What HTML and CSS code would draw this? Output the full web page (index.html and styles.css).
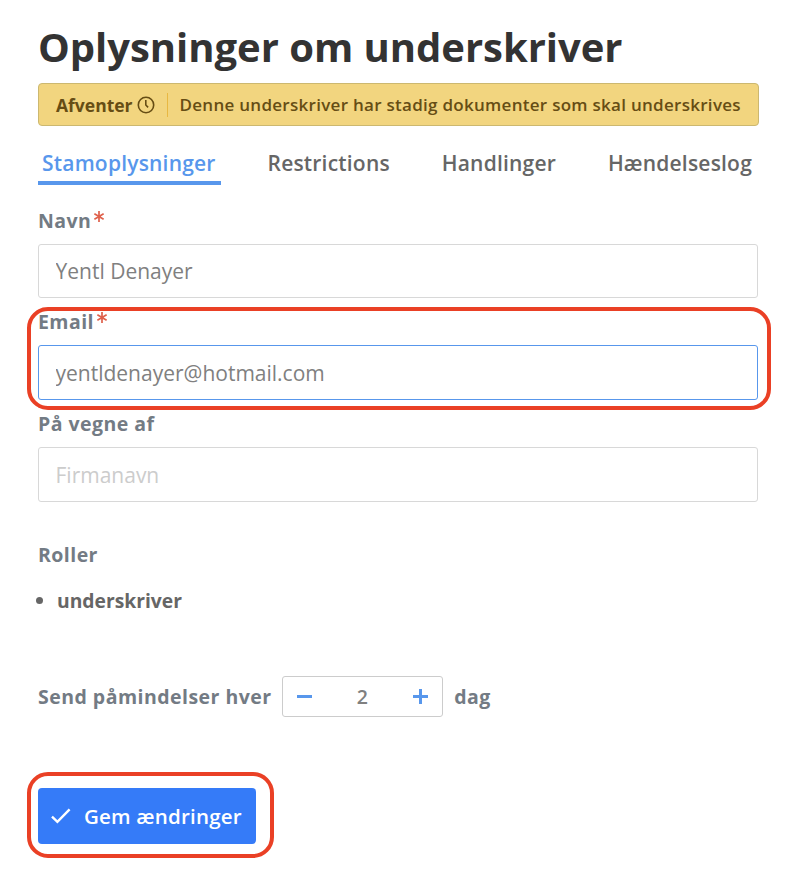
FILE: index.html
```
<!DOCTYPE html>
<html lang="da">
<head>
    <meta charset="UTF-8">
    <meta name="viewport" content="width=device-width, initial-scale=1.0">
    <title>Oplysninger om underskriver</title>
    <link rel="stylesheet" href="styles.css">
</head>
<body>
    <main class="page">
        <h1 class="title"><span>Oplysninger om underskriver</span></h1>

        <div class="status">
            <strong class="status-name">Afventer</strong>
            <svg class="status-icon" width="18" height="18" viewBox="0 0 18 18" fill="none" stroke="currentColor" stroke-width="1.6">
                <circle cx="9" cy="9" r="7.7"/>
                <path d="M8.8 4v5l2.3 2.4"/>
            </svg>
            <span class="status-text">Denne underskriver har stadig dokumenter som skal underskrives</span>
        </div>

        <nav class="tabs">
            <a class="tab active"><span>Stamoplysninger</span></a>
            <a class="tab"><span>Restrictions</span></a>
            <a class="tab"><span>Handlinger</span></a>
            <a class="tab"><span>Hændelseslog</span></a>
        </nav>

        <form class="form">
            <div class="field">
                <label for="name">Navn<svg class="required" width="10" height="11" viewBox="0 0 10 11"><path d="M5 0v11M.4 2.7l9.2 5.6M9.6 2.7L.4 8.3"/></svg></label>
                <input id="name" type="text" value="Yentl Denayer">
            </div>
            <div class="field highlight">
                <label for="email">Email<svg class="required" width="10" height="11" viewBox="0 0 10 11"><path d="M5 0v11M.4 2.7l9.2 5.6M9.6 2.7L.4 8.3"/></svg></label>
                <input id="email" class="focused" type="text" value="yentldenayer@hotmail.com">
            </div>
            <div class="field">
                <label for="company">På vegne af</label>
                <input id="company" type="text" placeholder="Firmanavn">
            </div>

            <h2 class="roles-title">Roller</h2>
            <ul class="roles">
                <li>underskriver</li>
            </ul>

            <div class="reminder">
                <span>Send påmindelser hver</span>
                <div class="stepper">
                    <svg width="15" height="15" viewBox="0 0 15 15"><path d="M0 7.5h15"/></svg>
                    <span>2</span>
                    <svg width="15" height="15" viewBox="0 0 15 15"><path d="M0 7.5h15M7.5 0v15"/></svg>
                </div>
                <span>dag</span>
            </div>

            <div class="save highlight">
                <button type="button">
                    <svg width="20" height="16" viewBox="0 0 20 16" fill="none" stroke="currentColor" stroke-width="2.4"><path d="M1 8.6l5.4 5.2L18.6 1.4"/></svg>
                    <span>Gem ændringer</span>
                </button>
            </div>
        </form>
    </main>
</body>
</html>
```
FILE: styles.css
```
* {
    box-sizing: border-box;
}
body {
    margin: 0;
    background-color: #fff;
    color: #666;
    font-family: "Open Sans", sans-serif;
    font-size: 20px;
}
.page {
    width: 759px;
    padding: 20px 0 40px 38px;
}
.title {
    margin: 0 0 9px;
    color: #333;
    font-size: 40px;
    line-height: 54px;
    letter-spacing: -.03px;
    white-space: nowrap;
}
.status {
    display: flex;
    align-items: center;
    height: 43px;
    padding: 1px 0 0 17px;
    background-color: #f2d57f;
    border: 1px solid #ccb870;
    border-radius: 4px;
    color: #664d14;
    font-size: 17.5px;
    white-space: nowrap;
}
.status-name {
    font-weight: 700;
}
.status-icon {
    margin: 0 12px 0 4px;
}
.status-text {
    padding-left: 12px;
    border-left: 1px solid #e8b842;
    font-size: 17px;
    font-weight: 600;
    line-height: 24px;
    letter-spacing: .28px;
}
.tabs {
    display: flex;
    justify-content: space-between;
    width: 719px;
    height: 59px;
    padding-top: 16px;
    font-size: 21px;
    font-weight: 600;
    letter-spacing: .2px;
}
.tab {
    height: 43px;
    padding: 0 5px 0 4px;
    line-height: 43px;
    border-bottom: 4px solid transparent;
}
.tab.active {
    color: #5897ec;
    border-color: #5897ec;
}
.form {
    width: 720px;
    padding-top: 21px;
}
.field {
    margin-bottom: 9px;
}
.field label {
    display: block;
    height: 38px;
    line-height: 30px;
    color: #737b84;
    font-size: 19.5px;
    font-weight: 700;
    letter-spacing: .45px;
}
.required {
    margin-left: 3px;
    vertical-align: 6px;
    fill: none;
    stroke: #df604b;
    stroke-width: 1.7;
}
.field input {
    display: block;
    width: 100%;
    height: 55px;
    padding: 0 17px 0 16.5px;
    border: 1px solid #d8d8d8;
    border-radius: 3px;
    outline: none;
    background-color: #fff;
    color: #808080;
    font: 21px "Open Sans", sans-serif;
}
.field:first-child input {
    height: 54px;
}
.field input::placeholder {
    color: #ccc;
}
.field input.focused {
    padding-top: 1px;
    border-color: #5897ec;
}
/* red frame around the parts the guide points at */
.highlight {
    position: relative;
}
.highlight::after {
    content: "";
    position: absolute;
    top: 0;
    right: -13px;
    bottom: -10px;
    left: -11px;
    border: 4px solid #ea4025;
    border-radius: 21px;
    pointer-events: none;
}
.roles-title {
    margin: 39px 0 0;
    color: #737b84;
    font-size: 19.5px;
    line-height: 28px;
    letter-spacing: .45px;
}
.roles {
    margin: 18px 0 0;
    padding-left: 19px;
    font-size: 19.3px;
    font-weight: 700;
    line-height: 28px;
}
.reminder {
    display: flex;
    align-items: center;
    height: 41px;
    margin-top: 61px;
    color: #737b84;
    font-size: 19.5px;
    font-weight: 700;
    letter-spacing: .47px;
}
.stepper {
    display: flex;
    align-items: center;
    justify-content: space-between;
    width: 161px;
    height: 41px;
    margin: 0 11px 0 10.5px;
    padding: 0 14px;
    border: 1px solid #ccc;
    border-radius: 3px;
    color: #808080;
    font-weight: 600;
}
.stepper svg {
    stroke: #5897ec;
    stroke-width: 3;
}
.save {
    width: 218px;
    margin-top: 71px;
}
.save button {
    display: flex;
    align-items: center;
    gap: 13px;
    width: 218px;
    height: 56px;
    padding: 0 0 0 13px;
    border: 0;
    border-radius: 4px;
    background-color: #357bf8;
    color: #fff;
    font: 600 20.5px "Open Sans", sans-serif;
    letter-spacing: .2px;
    white-space: nowrap;
}
.save.highlight::after {
    top: -16px;
    right: -18px;
    bottom: -14px;
}
```
